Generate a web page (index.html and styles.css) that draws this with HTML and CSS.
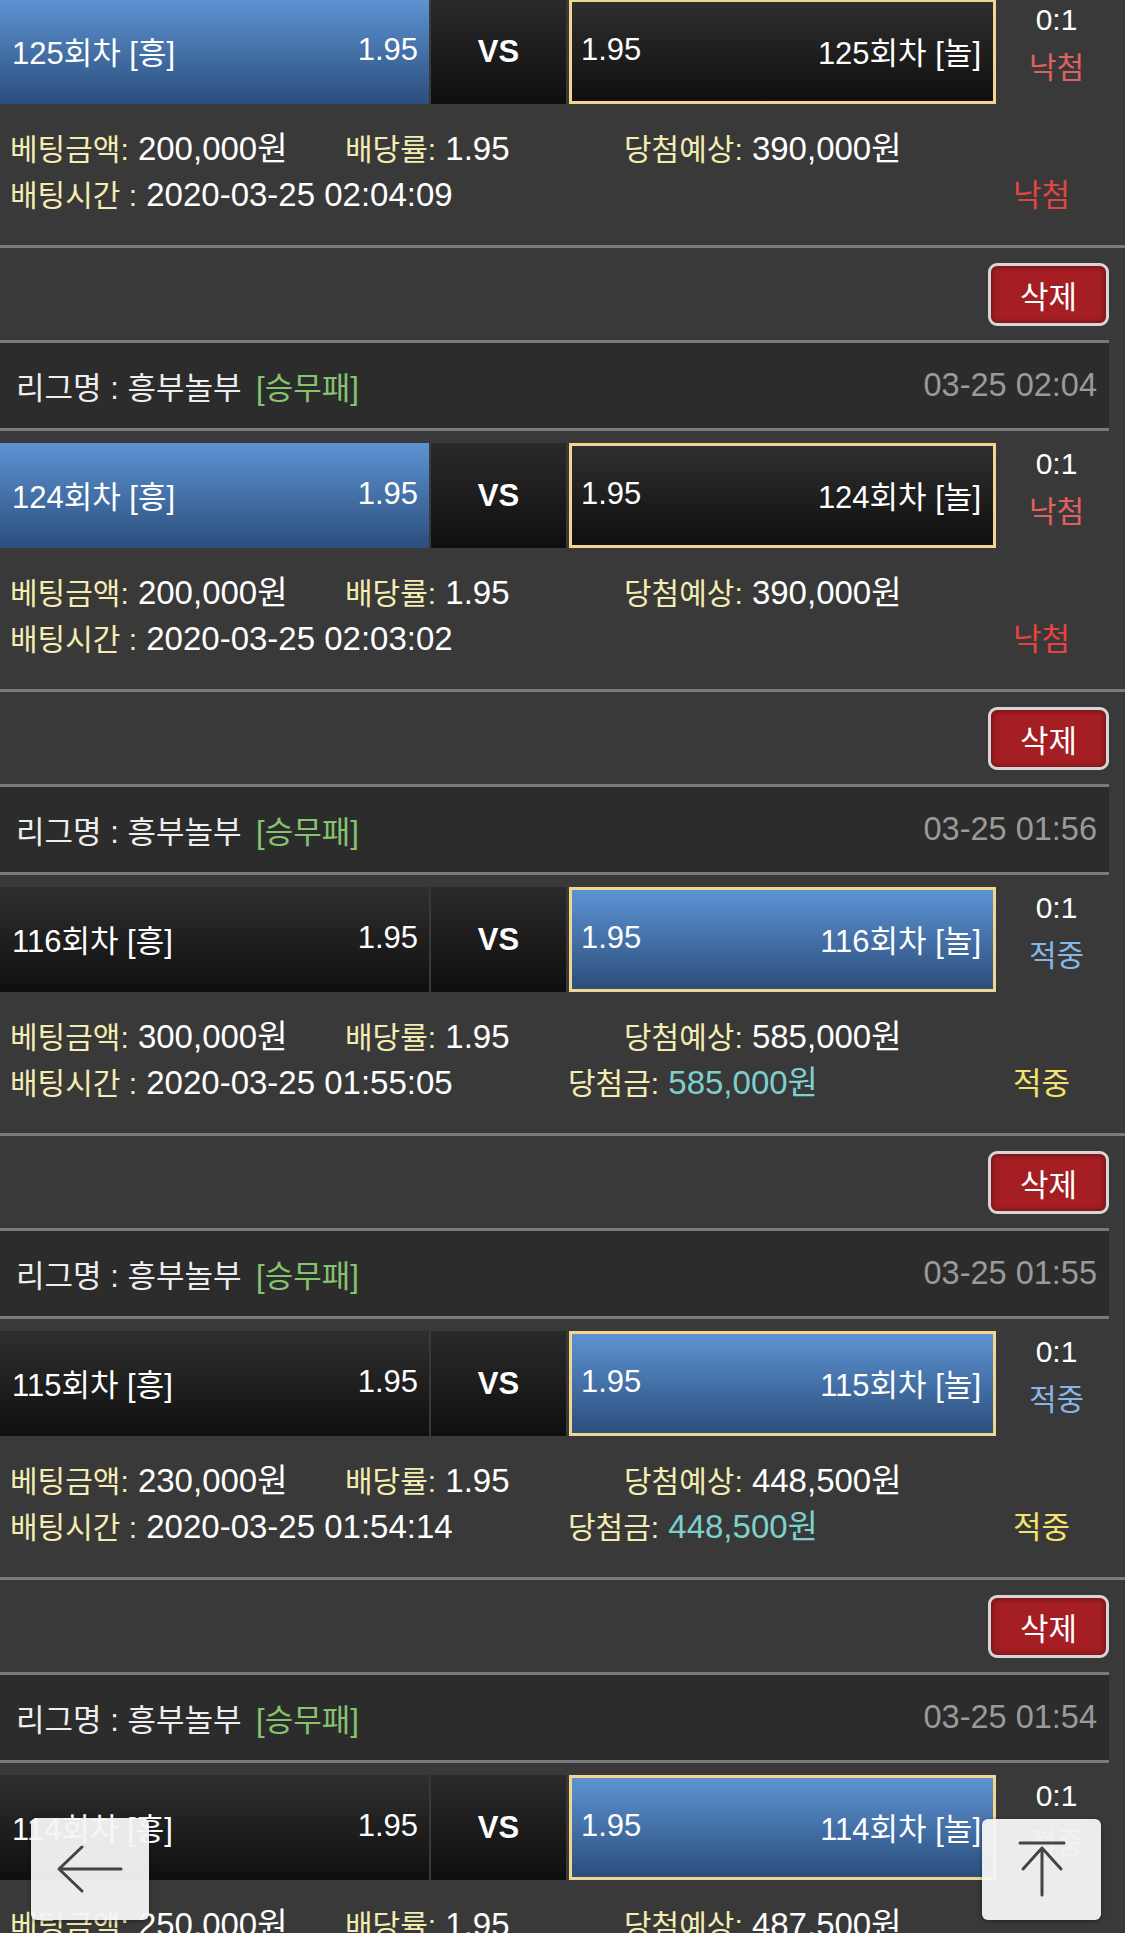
FILE: index.html
```html
<!DOCTYPE html>
<html lang="ko">
<head>
    <meta charset="UTF-8">
    <meta name="viewport" content="width=device-width, initial-scale=1.0">
    <title>배팅내역</title>
    <link rel="stylesheet" href="styles.css">
</head>

<body>
    <div class="bet-list">

        <!-- 125회차 -->
        <div class="bet">
            <div class="match">
                <div class="team home picked"><span>125회차 [흥]</span><span>1.95</span></div>
                <div class="vs">VS</div>
                <div class="team away"><span>1.95</span><span>125회차 [놀]</span></div>
                <div class="score">0:1<br><span class="lose">낙첨</span></div>
            </div>
            <div class="detail">
                <div class="line">
                    <span class="c-amount"><em>베팅금액:</em> 200,000원</span>
                    <span class="c-rate"><em>배당률:</em> 1.95</span>
                    <span><em>당첨예상:</em> 390,000원</span>
                </div>
                <div class="line">
                    <span class="c-time"><em>배팅시간 :</em> 2020-03-25 02:04:09</span>
                    <span class="c-win"></span>
                    <span class="result lose">낙첨</span>
                </div>
            </div>
            <div class="actions"><button class="btn-del">삭제</button></div>
        </div>

        <!-- 124회차 -->
        <div class="bet">
            <div class="league">
                <div>리그명 : 흥부놀부 <span class="type">[승무패]</span></div>
                <div class="date">03-25 02:04</div>
            </div>
            <div class="match">
                <div class="team home picked"><span>124회차 [흥]</span><span>1.95</span></div>
                <div class="vs">VS</div>
                <div class="team away"><span>1.95</span><span>124회차 [놀]</span></div>
                <div class="score">0:1<br><span class="lose">낙첨</span></div>
            </div>
            <div class="detail">
                <div class="line">
                    <span class="c-amount"><em>베팅금액:</em> 200,000원</span>
                    <span class="c-rate"><em>배당률:</em> 1.95</span>
                    <span><em>당첨예상:</em> 390,000원</span>
                </div>
                <div class="line">
                    <span class="c-time"><em>배팅시간 :</em> 2020-03-25 02:03:02</span>
                    <span class="c-win"></span>
                    <span class="result lose">낙첨</span>
                </div>
            </div>
            <div class="actions"><button class="btn-del">삭제</button></div>
        </div>

        <!-- 116회차 -->
        <div class="bet">
            <div class="league">
                <div>리그명 : 흥부놀부 <span class="type">[승무패]</span></div>
                <div class="date">03-25 01:56</div>
            </div>
            <div class="match">
                <div class="team home"><span>116회차 [흥]</span><span>1.95</span></div>
                <div class="vs">VS</div>
                <div class="team away picked"><span>1.95</span><span>116회차 [놀]</span></div>
                <div class="score">0:1<br><span class="hit">적중</span></div>
            </div>
            <div class="detail">
                <div class="line">
                    <span class="c-amount"><em>베팅금액:</em> 300,000원</span>
                    <span class="c-rate"><em>배당률:</em> 1.95</span>
                    <span><em>당첨예상:</em> 585,000원</span>
                </div>
                <div class="line">
                    <span class="c-time"><em>배팅시간 :</em> 2020-03-25 01:55:05</span>
                    <span class="c-win"><em>당첨금:</em> <b>585,000원</b></span>
                    <span class="result win">적중</span>
                </div>
            </div>
            <div class="actions"><button class="btn-del">삭제</button></div>
        </div>

        <!-- 115회차 -->
        <div class="bet">
            <div class="league">
                <div>리그명 : 흥부놀부 <span class="type">[승무패]</span></div>
                <div class="date">03-25 01:55</div>
            </div>
            <div class="match">
                <div class="team home"><span>115회차 [흥]</span><span>1.95</span></div>
                <div class="vs">VS</div>
                <div class="team away picked"><span>1.95</span><span>115회차 [놀]</span></div>
                <div class="score">0:1<br><span class="hit">적중</span></div>
            </div>
            <div class="detail">
                <div class="line">
                    <span class="c-amount"><em>베팅금액:</em> 230,000원</span>
                    <span class="c-rate"><em>배당률:</em> 1.95</span>
                    <span><em>당첨예상:</em> 448,500원</span>
                </div>
                <div class="line">
                    <span class="c-time"><em>배팅시간 :</em> 2020-03-25 01:54:14</span>
                    <span class="c-win"><em>당첨금:</em> <b>448,500원</b></span>
                    <span class="result win">적중</span>
                </div>
            </div>
            <div class="actions"><button class="btn-del">삭제</button></div>
        </div>

        <!-- 114회차 -->
        <div class="bet">
            <div class="league">
                <div>리그명 : 흥부놀부 <span class="type">[승무패]</span></div>
                <div class="date">03-25 01:54</div>
            </div>
            <div class="match">
                <div class="team home"><span>114회차 [흥]</span><span>1.95</span></div>
                <div class="vs">VS</div>
                <div class="team away picked"><span>1.95</span><span>114회차 [놀]</span></div>
                <div class="score">0:1<br><span class="hit">적중</span></div>
            </div>
            <div class="detail">
                <div class="line">
                    <span class="c-amount"><em>베팅금액:</em> 250,000원</span>
                    <span class="c-rate"><em>배당률:</em> 1.95</span>
                    <span><em>당첨예상:</em> 487,500원</span>
                </div>
            </div>
        </div>

    </div>

    <!-- 하단 이동 버튼 -->
    <button class="nav-btn nav-back" aria-label="뒤로">
        <svg width="70" height="50" viewBox="0 0 70 50">
            <path d="M4 25 H66 M27 3 L4 25 L27 47" fill="none" stroke="#444" stroke-width="3" stroke-linecap="round" stroke-linejoin="round"/>
        </svg>
    </button>
    <button class="nav-btn nav-top" aria-label="맨 위로">
        <svg width="50" height="60" viewBox="0 0 50 60">
            <path d="M3 3 H47 M25 8 V55 M6 29 L25 8 L44 29" fill="none" stroke="#444" stroke-width="3" stroke-linecap="round" stroke-linejoin="round"/>
        </svg>
    </button>
</body>
</html>
```

FILE: styles.css
```css
* {
    margin: 0;
    padding: 0;
    box-sizing: border-box;
}

body {
    font-family: "Liberation Sans", "Noto Sans CJK KR", sans-serif;
    background: #393939;
    color: #fff;
    width: 1125px;
    height: 1933px;
    overflow: hidden;
}

.bet-list {
    margin-top: -1px;
}

/* 리그 헤더 */
.league {
    display: flex;
    justify-content: space-between;
    align-items: center;
    width: 1109px;
    height: 91px;
    padding: 0 12px 0 16px;
    background: #2c2c2c;
    border-top: 3px solid #7a7a7a;
    border-bottom: 3px solid #7a7a7a;
    font-size: 31px;
    color: #eee;
    margin-bottom: 12px;
}

.league .type {
    color: #84c46e;
    margin-left: 6px;
}

.league .date {
    font-size: 32.5px;
    color: #9a9a9a;
}

/* 경기 */
.match {
    display: flex;
    height: 105px;
    font-size: 31px;
}

.team {
    display: flex;
    justify-content: space-between;
    align-items: center;
    padding-bottom: 3px;
    background: linear-gradient(#2f2f2f, #0f0f0f);
}

.team.home {
    width: 429px;
    padding-left: 12px;
    padding-right: 11px;
}

.team.away {
    width: 427px;
    margin-left: 3px;
    padding-left: 9px;
    padding-right: 12px;
    border: 3px solid #f0d68f;
}

.team.picked {
    background: linear-gradient(#5d93d3, #2b4e7c);
}

.vs {
    width: 135px;
    margin-left: 2px;
    display: flex;
    align-items: center;
    justify-content: center;
    font-weight: bold;
    font-size: 31px;
    background: linear-gradient(#2a2a2a, #0f0f0f);
}

.score {
    flex: 1;
    text-align: center;
    padding-right: 8px;
    margin-top: -3px;
    font-size: 30px;
    line-height: 48px;
}

.score .lose {
    color: #e26060;
}

.score .hit {
    color: #86b6e6;
}

/* 상세 내역 */
.detail {
    height: 144px;
    padding: 22px 0 0 10px;
    border-bottom: 3px solid #7a7a7a;
    font-size: 33px;
    line-height: 45px;
}

.detail .line {
    display: flex;
    align-items: baseline;
    white-space: nowrap;
}

.detail em {
    font-style: normal;
    font-size: 30px;
    color: #f4edb2;
}

.c-amount {
    width: 335px;
}

.c-rate {
    width: 279px;
}

.c-time {
    width: 558px;
}

.c-win {
    width: 445px;
}

.c-win b {
    font-weight: normal;
    color: #7ed0cf;
}

.result {
    font-size: 31px;
}

.result.lose {
    color: #e2453f;
}

.result.win {
    color: #f5e46c;
}

/* 삭제 버튼 */
.actions {
    display: flex;
    justify-content: flex-end;
    align-items: center;
    height: 92px;
    padding-right: 16px;
}

.btn-del {
    width: 121px;
    height: 63px;
    border: 3px solid #d6d6d6;
    border-radius: 9px;
    background: #a51e23;
    box-shadow: inset 0 0 6px rgba(0, 0, 0, 0.45);
    color: #fff;
    font-family: inherit;
    font-size: 31px;
}

/* 하단 고정 버튼 */
.nav-btn {
    position: fixed;
    bottom: 13px;
    display: flex;
    align-items: center;
    justify-content: center;
    border: none;
    border-radius: 6px;
    background: rgba(246, 246, 246, 0.95);
    box-shadow: 0 1px 4px rgba(0, 0, 0, 0.4);
}

.nav-back {
    left: 31px;
    width: 118px;
    height: 102px;
}

.nav-top {
    right: 24px;
    width: 119px;
    height: 101px;
}
```
